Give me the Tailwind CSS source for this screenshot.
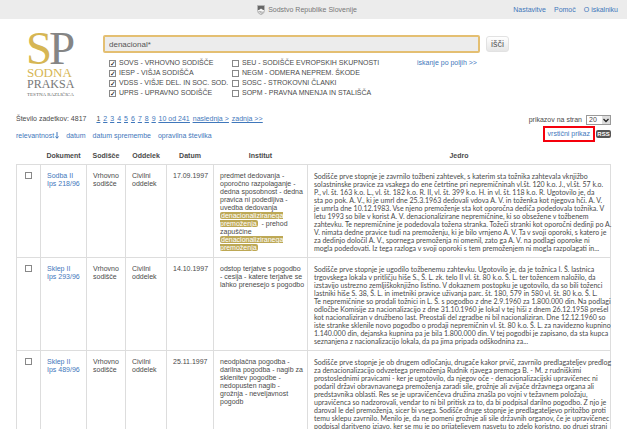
<!DOCTYPE html>
<html lang="sl">
<head>
  <meta charset="UTF-8">
  <meta name="viewport" content="width=device-width, initial-scale=1.0">
  <title>Sodna praksa</title>
  <script src="https://cdn.jsdelivr.net/npm/@tailwindcss/browser@4"></script>
</head>
<body class="bg-white font-['Liberation_Sans',Arial,sans-serif] text-[7px] leading-[8px] text-[#4a4a4a]">
  <header class="grid grid-cols-[1fr_auto_1fr] items-center h-[19px] pr-[9px] bg-[#ececec]">
    <div class="col-start-2 flex items-center gap-[3px] pr-1 text-[#777]">
      <svg class="w-2 h-[10px]" viewBox="0 0 8 10">
        <path d="M0.5 0.5H7.5V5.5Q7.5 8.5 4 9.7Q0.5 8.5 0.5 5.5Z" fill="#f8f8f8" stroke="#999" stroke-width="0.7"/>
        <path d="M1 1H7V5.3L5.3 4.6L4 3.6L2.8 4.6L1 5.3Z" fill="#666"/>
        <path d="M1.5 6.8Q2.7 6 4 6.8T6.5 6.8M2.3 8Q3.2 7.4 4 8T5.7 8" fill="none" stroke="#777" stroke-width="0.6"/>
      </svg>
      <span>Sodstvo Republike Slovenije</span>
    </div>
    <nav class="flex justify-end gap-2 text-[#3f77bb]">
      <a href="#">Nastavitve</a>
      <a href="#">Pomoč</a>
      <a href="#">O iskalniku</a>
    </nav>
  </header>

  <div class="flex pl-[26px] pt-3">
    <a href="#" class="shrink-0">
      <svg class="w-[52px] h-[68px] overflow-visible" viewBox="0 0 52 68" font-family="Liberation Serif, serif" role="img" aria-label="Sodna praksa">
        <text x="0" y="33" font-size="47" fill="#d6b654">S</text>
        <text x="23" y="33" font-size="47" fill="#858585">P</text>
        <text x="1" y="46" font-size="13" fill="#d6b654">SODNA</text>
        <text x="1" y="57" font-size="12" fill="#777">PRAKSA</text>
        <text x="1" y="65" font-size="5" fill="#666">TESTNA RAZLIČICA</text>
      </svg>
    </a>
    <form class="flex-1 ml-[25px] mt-1">
      <div class="flex items-center gap-[6px] pr-[118px]">
        <input type="text" aria-label="Iskanje" value="denacional*" class="flex-1 min-w-0 h-[18px] px-1 border-2 border-[#e4bf72] rounded-[2px] bg-[#ececec] text-[8px] text-[#555]">
        <button type="submit" class="w-[23px] h-4 border border-[#e2e2e2] rounded-[3px] bg-linear-to-b from-white to-[#e6e6e6] text-[9px] leading-[12px] text-[#555]">išči</button>
      </div>
      <div class="grid grid-cols-[123px_185px_auto] pl-[6px] pt-[5px] leading-[10px]">
        <div class="[&_label]:flex [&_label]:items-center [&_label]:gap-[3px] [&_label]:whitespace-nowrap [&_input]:appearance-none [&_input]:size-[7px] [&_input]:border [&_input]:border-[#888] [&_input]:text-[7px] [&_input]:leading-[5px] [&_input]:text-black [&_input]:checked:before:content-['✓']">
          <label><input type="checkbox" checked>SOVS - VRHOVNO SODIŠČE</label>
          <label><input type="checkbox" checked>IESP - VIŠJA SODIŠČA</label>
          <label><input type="checkbox" checked>VDSS - VIŠJE DEL. IN SOC. SOD.</label>
          <label><input type="checkbox" checked>UPRS - UPRAVNO SODIŠČE</label>
        </div>
        <div class="[&_label]:flex [&_label]:items-center [&_label]:gap-[3px] [&_label]:whitespace-nowrap [&_input]:appearance-none [&_input]:size-[7px] [&_input]:border [&_input]:border-[#888] [&_input]:text-[7px] [&_input]:leading-[5px] [&_input]:text-black [&_input]:checked:before:content-['✓']">
          <label><input type="checkbox">SEU - SODIŠČE EVROPSKIH SKUPNOSTI</label>
          <label><input type="checkbox">NEGM - ODMERA NEPREM. ŠKODE</label>
          <label><input type="checkbox">SOSC - STROKOVNI ČLANKI</label>
          <label><input type="checkbox">SOPM - PRAVNA MNENJA IN STALIŠČA</label>
        </div>
        <a href="#" class="text-[#3f77bb]">iskanje po poljih &gt;&gt;</a>
      </div>
    </form>
  </div>

  <main class="px-4 pt-3">
    <div class="flex justify-between">
      <div>
        <div class="flex items-center gap-[10px] h-4">
          <span>Število zadetkov: 4817</span>
          <nav class="flex gap-[3px] text-[#3f77bb] underline">
            <span class="text-[#4a4a4a] inline-block">1</span>
            <a href="#">2</a>
            <a href="#">3</a>
            <a href="#">4</a>
            <a href="#">5</a>
            <a href="#">6</a>
            <a href="#">7</a>
            <a href="#">8</a>
            <a href="#">9</a>
            <a href="#">10 od 241</a>
            <a href="#">naslednja &gt;</a>
            <a href="#">zadnja &gt;&gt;</a>
          </nav>
        </div>
        <nav class="flex items-center gap-[7px] h-4 pt-px text-[#3f77bb]">
          <a href="#" class="flex items-center gap-px">relevantnost
            <svg class="w-1 h-[7px]" viewBox="0 0 4 7" fill="none" stroke="#3f77bb"><path d="M2 0V6M0.5 4.5L2 6.3L3.5 4.5"/></svg>
          </a>
          <a href="#">datum</a>
          <a href="#">datum spremembe</a>
          <a href="#">opravilna številka</a>
        </nav>
      </div>
      <div class="flex flex-col items-end pt-1">
        <label class="flex items-center gap-1">prikazov na stran
          <span class="relative">
            <select class="block appearance-none w-[25px] h-[10px] pl-[2px] border border-[#999] bg-white text-[7px] leading-[8px]"><option>20</option></select>
            <svg class="absolute right-px top-px w-2 h-2 pointer-events-none" viewBox="0 0 8 8"><path d="M0 0H8V8H0Z" fill="#ddd"/><path d="M1.5 3L4 5.5L6.5 3" fill="none" stroke="#222" stroke-width="1.3"/></svg>
          </span>
        </label>
        <div class="flex items-center gap-px pt-px">
          <a href="#" class="border-2 border-[#f5000c] px-[3px] py-[2px] text-[#3f77bb]">vrstični prikaz</a>
          <a href="#" class="w-[15px] rounded-[2px] bg-[#555] text-center text-[6px] font-bold text-white">RSS</a>
        </div>
      </div>
    </div>

    <table class="w-full mt-[9px] table-fixed border-collapse">
      <colgroup>
        <col class="w-6">
        <col class="w-[46px]">
        <col class="w-[39px]">
        <col class="w-[41px]">
        <col class="w-[47px]">
        <col class="w-[94px]">
        <col>
      </colgroup>
      <thead>
        <tr class="h-3 align-top">
          <th></th>
          <th>Dokument</th>
          <th>Sodišče</th>
          <th>Oddelek</th>
          <th>Datum</th>
          <th>Institut</th>
          <th>Jedro</th>
        </tr>
      </thead>
      <tbody class="align-top whitespace-nowrap *:h-[93px] *:*:border *:*:border-[#ddd] *:*:pt-[7px] *:*:pl-[6px] [&_input]:appearance-none [&_input]:block [&_input]:ml-[2px] [&_input]:size-[7px] [&_input]:border [&_input]:border-[#888]">
        <tr>
          <td><input type="checkbox" aria-label="Izberi"></td>
          <td><a href="#" class="text-[#3f77bb]">Sodba II<br>Ips 218/96</a></td>
          <td>Vrhovno<br>sodišče</td>
          <td>Civilni<br>oddelek</td>
          <td>17.09.1997</td>
          <td>predmet dedovanja -<br>oporočno razpolaganje -<br>dedna sposobnost - dedna<br>pravica ni podedljiva -<br>uvedba dedovanja<br><mark class="rounded-[2px] bg-[#bda855] px-px text-white">denacionaliziranega<br>premoženja</mark> &nbsp;- prehod<br>zapuščine<br><mark class="rounded-[2px] bg-[#bda855] px-px text-white">denacionaliziranega<br>premoženja</mark></td>
          <td class="font-[Lato,sans-serif]">Sodišče prve stopnje je zavrnilo tožbeni zahtevek, s katerim sta tožnika zahtevala vknjižbo<br>solastninske pravice za vsakega do ene četrtine pri nepremičninah vl.št. 120 k.o. J., vl.št. 57 k.o.<br>P., vl. št. 163 k.o. L., vl. št. 182 k.o. R. II, vl. št. 399 k.o. H. in vl. št. 118 k.o. R. Ugotovilo je, da<br>sta po pok. A. V., ki je umrl dne 25.3.1963 dedovali vdova A. V. in toženka kot njegova hči. A. V.<br>je umrla dne 10.12.1983. Vse njeno premoženje sta kot oporočna dediča podedovala tožnika. V<br>letu 1993 so bile v korist A. V. denacionalizirane nepremičnine, ki so obsežene v tožbenem<br>zahtevku. Te nepremičnine je podedovala tožena stranka. Tožeči stranki kot oporočni dedinji po A.<br>V. nimata dedne pravice tudi na premoženju, ki je bilo vrnjeno A. V. Ta v svoji oporoki, s katero je<br>za dedinjo določil A. V., spornega premoženja ni omenil, zato ga A. V. na podlagi oporoke ni<br>mogla podedovati. Iz tega razloga v svoji oporoki s tem premoženjem ni mogla razpolagati in...</td>
        </tr>
        <tr>
          <td><input type="checkbox" aria-label="Izberi"></td>
          <td><a href="#" class="text-[#3f77bb]">Sklep II<br>Ips 293/96</a></td>
          <td>Vrhovno<br>sodišče</td>
          <td>Civilni<br>oddelek</td>
          <td>14.10.1997</td>
          <td>odstop terjatve s pogodbo<br>- cesija - katere terjatve se<br>lahko prenesejo s pogodbo</td>
          <td class="font-[Lato,sans-serif]">Sodišče prve stopnje je ugodilo tožbenemu zahtevku. Ugotovilo je, da je tožnica I. Š. lastnica<br>trgovskega lokala v pritličju hiše S., Š. L. zk. telo II vl. št. 80 k.o. Š. L. ter tožencem naložilo, da<br>izstavijo ustrezno zemljiškoknjižno listino. V dokaznem postopku je ugotovilo, da so bili toženci<br>lastniki hiše S. 38, Š. L. in imetniki pravice uživanja parc. št. 180, 579 in 580 vl. št. 80 k.o. Š. L.<br>Te nepremičnine so prodali tožnici in L. Š. s pogodbo z dne 2.9.1960 za 1.800.000 din. Na podlagi<br>odločbe Komisije za nacionalizacijo z dne 31.10.1960 je lokal v tej hiši z dnem 26.12.1958 prešel<br>kot nacionaliziran v družbeno last. Preostali del zgradbe ni bil nacionaliziran. Dne 12.12.1960 so<br>iste stranke sklenile novo pogodbo o prodaji nepremičnin vl. št. 80 k.o. Š. L. za navidezno kupnino<br>1.140.000 din, dejanska kupnina pa je bila 1.800.000 din. V tej pogodbi je zapisano, da sta kupca<br>seznanjena z nacionalizacijo lokala, da pa jima pripada odškodnina za...</td>
        </tr>
        <tr>
          <td><input type="checkbox" aria-label="Izberi"></td>
          <td><a href="#" class="text-[#3f77bb]">Sklep II<br>Ips 489/96</a></td>
          <td>Vrhovno<br>sodišče</td>
          <td>Civilni<br>oddelek</td>
          <td>25.11.1997</td>
          <td>neodplačna pogodba -<br>darilna pogodba - nagib za<br>sklenitev pogodbe -<br>nedopusten nagib -<br>grožnja - neveljavnost<br>pogodb</td>
          <td class="font-[Lato,sans-serif]">Sodišče prve stopnje je ob drugem odločanju, drugače kakor prvič, zavrnilo predlagateljev predlog<br>za denacionalizacijo odvzetega premoženja Rudnik rjavega premoga B. - M. z rudniškimi<br>prostoslednimi pravicami - ker je ugotovilo, da njegov oče - denacionalizacijski upravičenec ni<br>podaril državi obravnavanega premoženja zaradi sile, grožnje ali zvijače državnega organa ali<br>predstavnika oblasti. Res se je upravičenčeva družina znašla po vojni v težavnem položaju,<br>upravičenca so nadzorovali, vendar to ni bil pritisk za to, da bi podpisal darilno pogodbo. Z njo je<br>daroval le del premoženja, sicer bi vsega. Sodišče druge stopnje je predlagateljevo pritožbo proti<br>temu sklepu zavrnilo. Menilo je, da ne pomeni grožnje ali sile državnih organov, če je upravičenec<br>podpisal daritveno izjavo, ker se mu je po prijateljevem nasvetu to zdelo koristno, po drugi strani</td>
        </tr>
      </tbody>
    </table>
  </main>
</body>
</html>
